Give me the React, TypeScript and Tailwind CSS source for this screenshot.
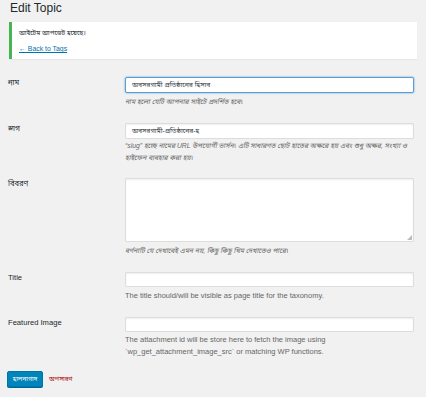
import React from "react";

const font = { fontFamily: '"Liberation Sans", "Noto Sans", "Noto Sans Bengali", Arial, sans-serif' };

function Label({ children }: { children: React.ReactNode }) {
  return <div className="w-[125px] shrink-0 text-[7.6px] leading-[11px] text-[#23282d] pl-[8px]">{children}</div>;
}

function Desc({ children, italic, bn }: { children: React.ReactNode; italic?: boolean; bn?: boolean }) {
  return (
    <p className={`${bn ? "text-[6.8px]" : "text-[7.5px]"} leading-[12px] text-[#666] ${italic ? "italic" : ""}`}>{children}</p>
  );
}

const inputCls =
  "bg-white border border-[#ddd] rounded-[1px] shadow-[inset_0_1px_2px_rgba(0,0,0,0.07)]";

export default function App() {
  return (
    <div className="w-[426px] h-[397px] bg-[#f1f1f1] overflow-hidden" style={font}>
      <h1 className="pl-[10px] pt-[1px] text-[12px] leading-[14px] text-[#23282d] font-normal">Edit Topic</h1>

      <div className="ml-[9px] mr-[9px] mt-[7px] h-[37px] bg-white border-l-[3px] border-[#46b450] shadow-[0_1px_1px_rgba(0,0,0,0.04)] pl-[7px] pt-[5px]">
        <p className="text-[6.6px] leading-[11px] text-[#23282d]">আইটেম আপডেট হয়েছে।</p>
        <p className="mt-[5px] text-[6.9px] leading-[11px]">
          <a className="text-[#0073aa] underline">← Back to Tags</a>
        </p>
      </div>

      {/* Name */}
      <div className="flex mt-[18px]">
        <Label>নাম</Label>
        <div className="w-[289px]">
          <div className="h-[16px] bg-white border border-[#5b9dd9] rounded-[2px] shadow-[0_0_2px_rgba(30,140,190,0.8)] pl-[6px] text-[6.8px] leading-[14px] text-[#32373c]">
            অবসরগামী প্রতিষ্ঠানের হিসাব
          </div>
          <div className="mt-[3px]">
            <Desc italic bn>নাম হলো যেটি আপনার সাইটে প্রদর্শিত হবে।</Desc>
          </div>
        </div>
      </div>

      {/* Slug */}
      <div className="flex mt-[15px]">
        <Label>স্লাগ</Label>
        <div className="w-[289px]">
          <div className={`h-[16px] ${inputCls} pl-[6px] text-[6.8px] leading-[14px] text-[#32373c]`}>
            অবসরগামী-প্রতিষ্ঠানের-হ
          </div>
          <div className="mt-[1px]">
            <Desc italic bn>
              “slug” হচ্ছে নামের URL উপযোগী ভার্সন। এটি সাধারণত ছোট হাতের অক্ষরে হয় এবং শুধু অক্ষর, সংখ্যা ও হাইফেন ব্যবহার করা হয়।
            </Desc>
          </div>
        </div>
      </div>

      {/* Description */}
      <div className="flex mt-[14px]">
        <Label>বিবরণ</Label>
        <div className="w-[289px]">
          <div className={`relative h-[64px] ${inputCls}`}>
            <svg className="absolute right-[1px] bottom-[1px]" width="5" height="5" viewBox="0 0 5 5">
              <path d="M5 0 L5 5 L0 5 Z" fill="#bbb" />
            </svg>
          </div>
          <div className="mt-[3px]">
            <Desc italic bn>বর্ণনাটি যে দেখাবেই এমন নয়, কিছু কিছু থিম দেখাতেও পারে।</Desc>
          </div>
        </div>
      </div>

      {/* Title */}
      <div className="flex mt-[15px]">
        <Label>Title</Label>
        <div className="w-[289px]">
          <div className={`h-[15px] ${inputCls}`} />
          <div className="mt-[3px]">
            <Desc>The title should/will be visible as page title for the taxonomy.</Desc>
          </div>
        </div>
      </div>

      {/* Featured Image */}
      <div className="flex mt-[15px]">
        <Label>Featured Image</Label>
        <div className="w-[289px]">
          <div className={`h-[15px] ${inputCls}`} />
          <div className="mt-[2px]">
            <Desc>
              The attachment id will be store here to fetch the image using
              <br />
              `wp_get_attachment_image_src` or matching WP functions.
            </Desc>
          </div>
        </div>
      </div>

      <div className="flex items-center mt-[13px] pl-[7px]">
        <button className="h-[16px] w-[36px] bg-[#0085ba] border border-[#0073aa] rounded-[2px] shadow-[0_1px_0_#006799] text-white text-[6.3px] leading-[14px]">
          হালনাগাদ
        </button>
        <a className="ml-[6px] text-[#a00] text-[6.3px] leading-[14px]">অপসারণ</a>
      </div>
    </div>
  );
}
